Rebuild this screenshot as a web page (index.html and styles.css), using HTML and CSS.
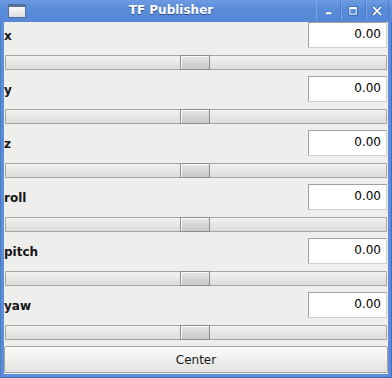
FILE: index.html
```html
<!DOCTYPE html>
<html>
<head>
<meta charset="utf-8">
<link rel="stylesheet" href="styles.css">
</head>
<body>
<div class="window">
  <div class="titlebar">
    <div class="appicon"><div class="appicon-bar"></div></div>
    <div class="title">TF Publisher</div>
    <div class="wbuttons">
      <div class="wbtn"><svg width="25" height="19" viewBox="0 0 25 19"><rect x="9" y="11" width="7" height="3" fill="#fff" stroke="#2f5fa8" stroke-width="0.6"/></svg></div>
      <div class="wbtn"><svg width="25" height="19" viewBox="0 0 25 19"><rect x="7.5" y="5.5" width="9" height="9" fill="none" stroke="#2f5fa8" stroke-width="1"/><rect x="8.5" y="6.5" width="7" height="7" fill="none" stroke="#fff" stroke-width="1"/><rect x="8" y="6" width="8" height="2" fill="#fff"/></svg></div>
      <div class="wbtn last"><svg width="24" height="19" viewBox="0 0 24 19"><path d="M7.5 6 L15.5 14 M15.5 6 L7.5 14" stroke="#2f5fa8" stroke-width="3.4" stroke-linecap="square"/><path d="M7.5 6 L15.5 14 M15.5 6 L7.5 14" stroke="#fff" stroke-width="2" stroke-linecap="square"/></svg></div>
    </div>
  </div>
  <div class="content">
    <div class="row">
      <div class="head"><span class="label">x</span><div class="field">0.00</div></div>
      <div class="trough"><div class="handle" style="margin-left:175px"></div></div>
    </div>
    <div class="row">
      <div class="head"><span class="label">y</span><div class="field">0.00</div></div>
      <div class="trough"><div class="handle" style="margin-left:175px"></div></div>
    </div>
    <div class="row">
      <div class="head"><span class="label">z</span><div class="field">0.00</div></div>
      <div class="trough"><div class="handle" style="margin-left:175px"></div></div>
    </div>
    <div class="row">
      <div class="head"><span class="label">roll</span><div class="field">0.00</div></div>
      <div class="trough"><div class="handle" style="margin-left:175px"></div></div>
    </div>
    <div class="row">
      <div class="head"><span class="label">pitch</span><div class="field">0.00</div></div>
      <div class="trough"><div class="handle" style="margin-left:175px"></div></div>
    </div>
    <div class="row">
      <div class="head"><span class="label">yaw</span><div class="field">0.00</div></div>
      <div class="trough"><div class="handle" style="margin-left:175px"></div></div>
    </div>
    <button class="center">Center</button>
  </div>
</div>
</body>
</html>
```
FILE: styles.css
```css
html, body {
  margin: 0;
  padding: 0;
  background: #ffffff;
}
.window {
  width: 392px;
  height: 378px;
  box-sizing: border-box;
  background: #5b8ddb;
  display: flex;
  flex-direction: column;
  font-family: "DejaVu Sans", sans-serif;
  border-bottom: 1px solid #3f6fb8;
  border-left: 1px solid #4a7cc8;
  border-right: 1px solid #3f6fb8;
}
.titlebar {
  height: 22px;
  flex: none;
  display: flex;
  align-items: flex-start;
  background: linear-gradient(#6d9be2, #5a8bd9 40%, #5687d6);
  margin: 0 -1px;
}
.appicon {
  margin: 4px 0 0 8px;
  width: 16px;
  height: 12px;
  border: 1px solid #4d6f9e;
  border-radius: 1px;
  background: linear-gradient(#ffffff, #dedede);
  display: flex;
  flex-direction: column;
}
.appicon-bar {
  height: 2px;
  background: #5a6f8e;
}
.title {
  flex: 1;
  text-align: center;
  color: #ffffff;
  font-weight: bold;
  font-size: 12px;
  line-height: 20px;
  text-shadow: 0 1px 0 #2c4f86;
}
.wbuttons {
  display: flex;
  margin-top: 1px;
  margin-right: 3px;
}
.wbtn {
  width: 25px;
  height: 19px;
  border-left: 1px solid #7aa3e4;
  border-right: 1px solid #4a7bc6;
  box-sizing: border-box;
  display: flex;
}
.wbtn.last {
  width: 23px;
}
.content {
  flex: 1;
  margin: 0 3px 3px 3px;
  background: #eeeeec;
  display: flex;
  flex-direction: column;
}
.row {
  height: 54px;
  display: flex;
  flex-direction: column;
}
.head {
  height: 26px;
  display: flex;
  align-items: center;
  justify-content: space-between;
  margin-bottom: 7px;
}
.label {
  font-weight: bold;
  font-size: 12px;
  color: #141414;
  padding-top: 2px;
}
.field {
  width: 79px;
  height: 26px;
  box-sizing: border-box;
  margin-right: 1px;
  background: #ffffff;
  border-top: 1px solid #a0a09e;
  border-left: 1px solid #a0a09e;
  border-right: 1px solid #d0d0ce;
  border-bottom: 1px solid #d0d0ce;
  font-size: 12px;
  text-align: right;
  padding-right: 5px;
  line-height: 23px;
  color: #000;
}
.trough {
  height: 15px;
  margin: 0 1px;
  box-sizing: border-box;
  background: linear-gradient(#f4f4f2, #e6e6e4 50%, #dcdcda);
  box-shadow: inset 0 0 0 1px #a6a6a4;
  border-radius: 1px;
  display: flex;
}
.handle {
  width: 30px;
  height: 15px;
  box-sizing: border-box;
  border: 1px solid #8e8e8c;
  background: linear-gradient(#e8e8e8, #d6d6d6 50%, #c9c9c9);
  box-shadow: inset 1px 1px 0 #fafafa;
}
.center {
  margin: 0;
  height: 27px;
  width: 384px;
  box-sizing: border-box;
  border: 1px solid #a3a3a1;
  border-radius: 2px;
  background: linear-gradient(#fbfbfa, #efefed 50%, #e2e2e0);
  font-family: "DejaVu Sans", sans-serif;
  font-size: 12px;
  color: #1a1a1a;
  padding: 0;
}
```
